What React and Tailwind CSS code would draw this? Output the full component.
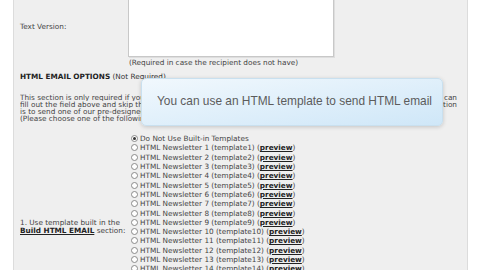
// App.jsx
const font = { fontFamily: '"DejaVu Sans", Verdana, sans-serif' };

function Radio({ checked }) {
  return (
    <span className="mr-[2px] flex h-[7px] w-[7px] shrink-0 items-center justify-center rounded-full border border-[#8a8a8a] bg-white">
      {checked && <span className="h-[3px] w-[3px] rounded-full bg-[#333]" />}
    </span>
  );
}

function Tooltip() {
  return (
    <div className="absolute left-[141px] top-[78px] flex h-[48px] w-[302px] items-center rounded-[5px] border border-[#c9e0ef] bg-gradient-to-br from-[#f1f8fd] to-[#cfe7f8] pl-[15px] shadow-[0_1px_4px_rgba(0,0,0,0.18)]">
      <span
        className="whitespace-nowrap text-[11.9px] text-[#5c5c5c]"
        style={{ fontFamily: '"Liberation Sans", Arial, sans-serif' }}
      >
        You can use an HTML template to send HTML email
      </span>
    </div>
  );
}

export default function App() {
  const templates = Array.from({ length: 19 }, (_, i) => i + 1);

  return (
    <div className="relative h-[270px] w-[480px] overflow-hidden bg-white" style={font}>
      <div className="ml-[13px] mt-[-14px] w-[455px] border-x border-[#dcdcdc] bg-[#efefef] text-[7.3px] leading-[7px] text-[#333]">
        {/* text version row */}
        <div className="flex">
          <div className="flex w-[114px] shrink-0 items-center pl-[6px] text-[#444]">Text Version:</div>
          <div className="flex flex-col">
            <div className="h-[71px] w-[206px] border border-[#c8c8c8] bg-white shadow-[1px_1px_0_#dedede]" />
            <div className="ml-[1px] mt-[2px] h-[8px] whitespace-nowrap text-[#444]">(Required in case the recipient does not have)</div>
          </div>
        </div>

        {/* html options heading */}
        <div className="mt-[6px] pl-[6px]">
          <span className="font-bold text-[#222]">HTML EMAIL OPTIONS</span> (Not Required)
        </div>

        {/* description */}
        <div className="mt-[14px] whitespace-nowrap pl-[6px] pr-[10px] text-[#444]">
          <div className="flex">
            <span className="min-w-0 flex-1 overflow-hidden">This section is only required if you want to send a HTML version of your newsletter. If you have the code, you</span>
            <span>can</span>
          </div>
          <div className="flex">
            <span className="min-w-0 flex-1 overflow-hidden">fill out the field above and skip the rest of this section. If you do not have any code, the other</span>
            <span>option</span>
          </div>
          <div>is to send one of our pre-designed templates.</div>
          <div>(Please choose one of the following:)</div>
        </div>

        {/* template choices */}
        <div className="mt-[12px] flex">
          <div className="flex w-[114px] shrink-0 flex-col justify-center pl-[6px] text-[#444]">
            <div className="whitespace-nowrap leading-[8px]">1. Use template built in the</div>
            <div className="whitespace-nowrap leading-[8px]">
              <span className="font-bold text-[#222] underline">Build HTML EMAIL</span> section:
            </div>
          </div>
          <div className="flex flex-col pl-[3px] text-[#444]">
            <label className="flex h-[9.3px] items-center whitespace-nowrap">
              <Radio checked />
              Do Not Use Built-in Templates
            </label>
            {templates.map((n) => (
              <label key={n} className="flex h-[9.3px] items-center whitespace-nowrap">
                <Radio />
                HTML Newsletter {n} (template{n}) (
                <span className="font-bold text-[#222] underline">preview</span>)
              </label>
            ))}
          </div>
        </div>
      </div>

      <Tooltip />
    </div>
  );
}
